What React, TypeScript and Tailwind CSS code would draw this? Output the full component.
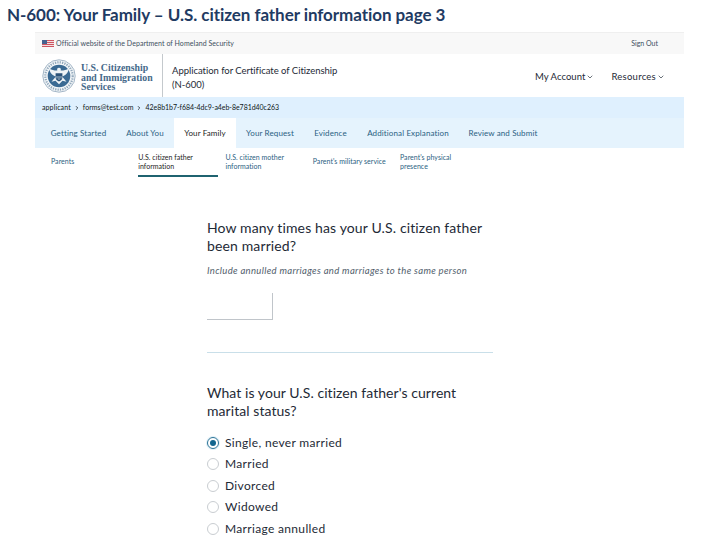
import { ChevronDown, ChevronRight } from 'lucide-react';

const tabs = [
  { label: 'Getting Started', width: 'w-[75px]', active: false },
  { label: 'About You', width: 'w-[58px]', active: false },
  { label: 'Your Family', width: 'w-[62px]', active: true },
  { label: 'Your Request', width: 'w-[68px]', active: false },
  { label: 'Evidence', width: 'w-[53px]', active: false },
  { label: 'Additional Explanation', width: 'w-[102px]', active: false },
  { label: 'Review and Submit', width: 'w-[88px]', active: false },
];

const sections = [
  { label: 'Parents', active: false },
  { label: 'U.S. citizen father information', active: true },
  { label: 'U.S. citizen mother information', active: false },
  { label: "Parent's military service", active: false },
  { label: "Parent's physical presence", active: false },
];

const statuses = [
  'Single, never married',
  'Married',
  'Divorced',
  'Widowed',
  'Marriage annulled',
];

function Flag() {
  return (
    <svg viewBox="0 0 12 7" className="w-3 h-[7px] shrink-0">
      <rect width="12" height="7" fill="#f0dfe1" />
      <path d="M0 .5h12M0 2.5h12M0 4.5h12M0 6.5h12" stroke="#cf5560" />
      <rect width="5" height="4" fill="#45628f" />
    </svg>
  );
}

function Seal() {
  return (
    <svg viewBox="0 0 34 34" className="w-[34px] h-[34px] shrink-0">
      <circle cx="17" cy="17" r="16.2" fill="#f4f7f9" stroke="#8fa6ba" strokeWidth=".8" />
      <circle cx="17" cy="17" r="13.7" fill="none" stroke="#93a9bc" strokeWidth="2.2" strokeDasharray="1.3 1.1" />
      <circle cx="17" cy="17" r="11.3" fill="#3a6a93" />
      <path
        d="M17 8.8c-1.7 0-2.2 1.3-1.7 2.7-2.8.1-5.6-.5-8-2.1.3 4 2.7 6.9 6.6 8l-4.4 5.4 4-1 3.5 3.4 3.5-3.4 4 1-4.4-5.4c3.9-1.1 6.3-4 6.6-8-2.4 1.6-5.2 2.2-8 2.1.5-1.4 0-2.7-1.7-2.7Z"
        fill="#eef3f6"
      />
      <path d="M13.6 14.3h6.8v4c0 2.2-1.5 3.4-3.4 4.2-1.9-.8-3.4-2-3.4-4.2Z" fill="#2c5379" />
      <path d="M15 17v2.5M17 17v4M19 17v2.5" stroke="#dfe9f0" strokeWidth=".7" />
    </svg>
  );
}

export default function App() {
  return (
    <div className="w-[720px] h-[540px] overflow-hidden bg-white font-['Lato',sans-serif] text-[#1e2a36]">
      <h1 className="h-8 pl-[7px] pt-[3px] text-[17px] leading-6 font-bold text-[#1f3b63] whitespace-nowrap tracking-[-0.06px]">
        N-600: Your Family – U.S. citizen father information page 3
      </h1>

      <div className="ml-[35px] w-[649px]">
        <div className="h-[22px] pl-[7px] pr-[26px] flex items-center justify-between bg-[#f8f8f8] border-t border-[#efefef] text-[7px] text-[#3d4f60]">
          <div className="flex items-center gap-[2px]">
            <Flag />
            <span className="whitespace-nowrap tracking-[0.05px]">Official website of the Department of Homeland Security</span>
          </div>
          <span>Sign Out</span>
        </div>

        <header className="h-[43px] flex">
          <div className="w-[128px] pl-[7px] pt-[5px] flex items-start gap-[5px] border-r border-[#c4c9cd]">
            <Seal />
            <p className="pt-[4px] font-['Liberation_Serif',serif] font-bold text-[9.8px] leading-[9.5px] text-[#45698a] whitespace-nowrap">
              U.S. Citizenship
              <br />
              and Immigration
              <br />
              Services
            </p>
          </div>
          <p className="pl-[9px] pt-[10px] text-[9.5px] leading-[14px] tracking-[-0.03px] whitespace-nowrap">
            Application for Certificate of Citizenship
            <br />
            (N-600)
          </p>
          <nav className="ml-auto pr-[19px] pt-[3px] flex items-center gap-[17px] text-[9.5px]">
            <span className="flex items-center gap-[1px] tracking-[0.05px]">
              My Account <ChevronDown className="w-2 h-2" />
            </span>
            <span className="flex items-center gap-[1px] tracking-[0.25px]">
              Resources <ChevronDown className="w-2 h-2" />
            </span>
          </nav>
        </header>

        <div className="h-[21px] pl-[7px] flex items-center gap-[3px] bg-[#dff0fe] text-[7px] text-[#101820] whitespace-nowrap">
          <span className="tracking-[0.1px]">applicant</span>
          <ChevronRight className="w-[6px] h-[6px]" strokeWidth={3} />
          <span className="tracking-[0.06px]">forms@test.com</span>
          <ChevronRight className="w-[6px] h-[6px]" strokeWidth={3} />
          <span className="tracking-[-0.04px]">42e8b1b7-f684-4dc9-a4eb-8e781d40c263</span>
        </div>

        <nav className="h-[30px] pl-[6px] flex bg-[#e5f3fd] text-[8px] text-[#2a6182]">
          {tabs.map((tab) => (
            <span
              key={tab.label}
              className={`flex items-center justify-center whitespace-nowrap tracking-[0.12px] ${tab.width} ${
                tab.active ? 'bg-white text-[#1b1b1b]' : ''
              }`}
            >
              {tab.label}
            </span>
          ))}
        </nav>

        <nav className="h-[29px] pl-[16px] flex gap-[8px] text-[7px] leading-[9px] text-[#2a6182]">
          {sections.map((section) => (
            <span
              key={section.label}
              className={`w-[79.25px] flex items-center border-b-2 tracking-[0.03px] ${
                section.active ? 'border-[#1f6370] text-[#1b1b1b]' : 'border-transparent'
              }`}
            >
              {section.label}
            </span>
          ))}
        </nav>
      </div>

      <main className="ml-[207px] pt-[42px] w-[286px]">
        <h2 className="text-[14px] leading-[18px] tracking-[0.13px] whitespace-nowrap">
          How many times has your U.S. citizen father
          <br />
          been married?
        </h2>
        <p className="mt-[10px] text-[9.5px] leading-3 tracking-[0.33px] italic text-[#52606c] whitespace-nowrap">
          Include annulled marriages and marriages to the same person
        </p>
        <input className="mt-[16px] block w-[66px] h-[27px] border-r border-b border-[#c0c5ca] outline-none" />
        <hr className="mt-[32px] border-[#c9dfe9]" />

        <h2 className="mt-[31px] text-[14px] leading-[18px] tracking-[0.06px] whitespace-nowrap">
          What is your U.S. citizen father's current
          <br />
          marital status?
        </h2>
        <div className="mt-[12px]">
          {statuses.map((status, i) => (
            <label key={status} className="h-[21.5px] flex items-center gap-[6px] text-[12px] tracking-[0.33px] whitespace-nowrap">
              <span
                className={`w-3 h-3 rounded-full border flex items-center justify-center ${
                  i === 0 ? 'border-[#2b7397] ring-1 ring-[#e0f0f8]' : 'border-[#c9cdd1]'
                }`}
              >
                {i === 0 && <span className="w-[6px] h-[6px] rounded-full bg-[#12658f]" />}
              </span>
              {status}
            </label>
          ))}
        </div>
      </main>
    </div>
  );
}
